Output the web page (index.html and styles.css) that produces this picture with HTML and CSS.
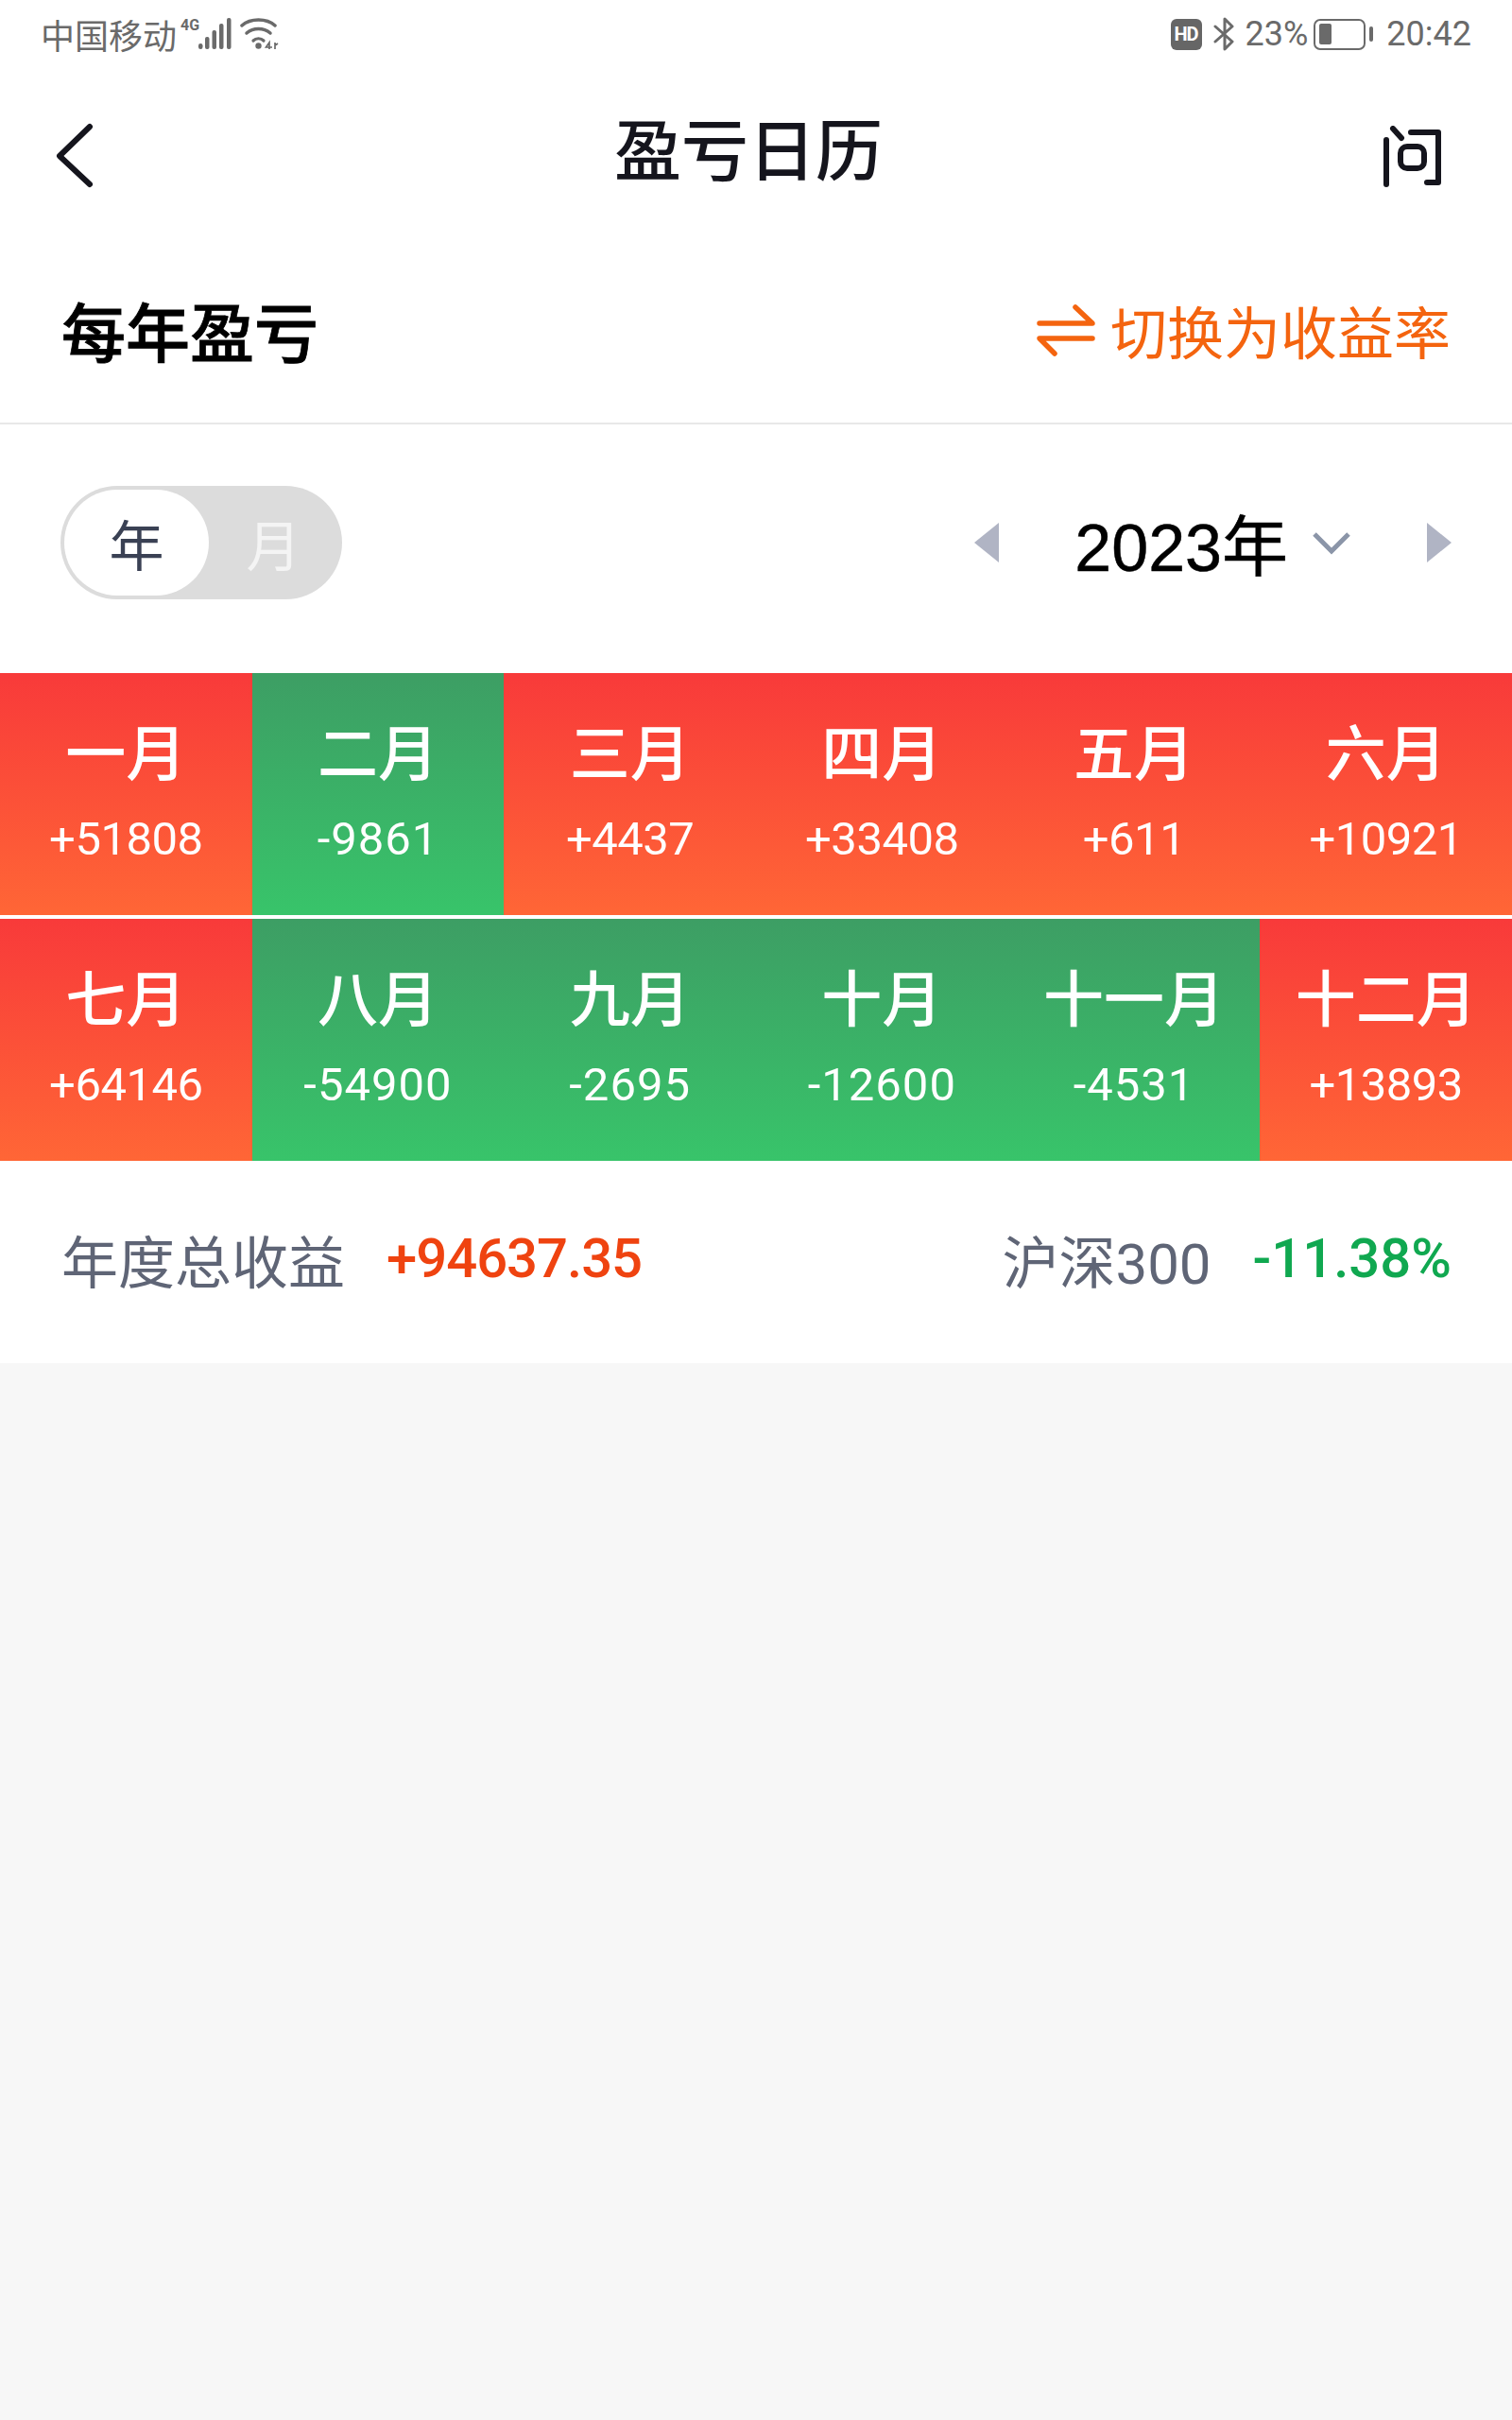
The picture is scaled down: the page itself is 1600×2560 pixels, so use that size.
FILE: index.html
```html
<!DOCTYPE html>
<html lang="zh-CN">
<head>
<meta charset="utf-8">
<title>盈亏日历</title>
<link rel="stylesheet" href="styles.css">
</head>
<body>
<div class="app">
  <div class="status">
    <div class="status-side">
      <span>中国移动</span>
      <svg class="ic-signal" width="56" height="36" viewBox="0 0 56 36">
        <text x="0" y="14" class="net">4G</text>
        <g fill="#6a6a6a"><rect x="19" y="28" width="4.500" height="6" rx="2.200"/><rect x="26" y="21" width="4.500" height="13" rx="2"/><rect x="33.500" y="14" width="4.500" height="20" rx="2"/><rect x="41" y="7" width="4.500" height="27" rx="2"/><rect x="49" y="1" width="4.500" height="33" rx="2"/></g>
      </svg>
      <svg class="ic-wifi" width="44" height="36" viewBox="0 0 44 36">
        <g fill="none" stroke="#6a6a6a" stroke-width="3.500" stroke-linecap="round"><path d="M3 9C12 1 29 1 38 9"/><path d="M8 17C15 11 26 11 33 17"/></g>
        <path d="M15 25C18 22 23 22 26 25" fill="none" stroke="#6a6a6a" stroke-width="3.200" stroke-linecap="round"/>
        <circle cx="20.500" cy="30.500" r="3.200" fill="#6a6a6a"/>
        <path d="M32 34v-7l-3.500 5H35M38 27v7M38 30l3-2" fill="none" stroke="#6a6a6a" stroke-width="1.700"/>
      </svg>
    </div>
    <div class="status-side">
      <span class="hd">HD</span>
      <svg class="ic-bt" width="24" height="36" viewBox="0 0 24 36">
        <path d="M2 26L20 10 12 2v32l8-8L2 10" fill="none" stroke="#6a6a6a" stroke-width="3" stroke-linejoin="round" stroke-linecap="round"/>
      </svg>
      <span class="pct">23%</span>
      <span class="battery"><span class="battery-level"></span></span><span class="battery-cap"></span>
      <span class="clock">20:42</span>
    </div>
  </div>

  <header class="nav">
    <svg class="ic-back" width="44" height="72" viewBox="0 0 44 72">
      <path d="M37 4L5 35 37 65" fill="none" stroke="#15151d" stroke-width="6" stroke-linecap="round" stroke-linejoin="round"/>
    </svg>
    <h1 class="nav-title">盈亏日历</h1>
    <svg class="ic-ask" width="66" height="66" viewBox="0 0 66 66">
      <g fill="none" stroke="#15151d" stroke-width="6" stroke-linecap="round" stroke-linejoin="round">
        <path d="M7 15V62"/><path d="M14 3l9 10"/><path d="M33 7H62V60H50"/><rect x="22" y="22" width="25" height="23" rx="7"/>
      </g>
    </svg>
  </header>

  <section class="head">
    <h2 class="head-title">每年盈亏</h2>
    <div class="switch">
      <svg width="62" height="56" viewBox="0 0 62 56">
        <g fill="none" stroke="#f4640f" stroke-width="5.500" stroke-linecap="round" stroke-linejoin="round">
          <path d="M3 21H59L41 4"/><path d="M59 37H3L19 53"/>
        </g>
      </svg>
      <span>切换为收益率</span>
    </div>
  </section>

  <section class="filter">
    <div class="toggle">
      <span class="toggle-on">年</span>
      <span class="toggle-off">月</span>
    </div>
    <div class="year-pick">
      <span class="tri tri-left"></span>
      <span class="year">2023年</span>
      <svg class="ic-chev" width="42" height="26" viewBox="0 0 42 26">
        <path d="M3 4L21 22 39 4" fill="none" stroke="#8b95a8" stroke-width="5"/>
      </svg>
      <span class="tri tri-right"></span>
    </div>
  </section>

  <section class="months">
    <div class="cell up"><b>一月</b><i>+51808</i></div>
    <div class="cell down"><b>二月</b><i>-9861</i></div>
    <div class="cell up"><b>三月</b><i>+4437</i></div>
    <div class="cell up"><b>四月</b><i>+33408</i></div>
    <div class="cell up"><b>五月</b><i>+611</i></div>
    <div class="cell up"><b>六月</b><i>+10921</i></div>
    <div class="cell up"><b>七月</b><i>+64146</i></div>
    <div class="cell down"><b>八月</b><i>-54900</i></div>
    <div class="cell down"><b>九月</b><i>-2695</i></div>
    <div class="cell down"><b>十月</b><i>-12600</i></div>
    <div class="cell down"><b>十一月</b><i>-4531</i></div>
    <div class="cell up"><b>十二月</b><i>+13893</i></div>
  </section>

  <section class="total">
    <div class="total-item"><span class="label">年度总收益</span><span class="val red">+94637.35</span></div>
    <div class="total-item"><span class="label">沪深300</span><span class="val green">-11.38%</span></div>
  </section>
</div>
</body>
</html>
```

FILE: styles.css
```css
* { box-sizing: border-box; }
html, body { margin: 0; padding: 0; }
body {
  width: 1600px;
  height: 2560px;
  background: #f7f7f7;
  font-family: "Roboto", "Noto Sans CJK SC", sans-serif;
}
.app { display: flex; flex-direction: column; }

/* status bar */
.status {
  height: 72px;
  background: #fff;
  padding: 0 43px 0 43px;
  display: flex;
  justify-content: space-between;
  align-items: center;
  color: #6a6a6a;
  font-size: 36px;
}
.status-side { display: flex; align-items: center; }
.ic-signal { margin-left: 4px; }
.ic-wifi { margin-left: 6px; }
.net { font: 700 16px "Roboto", sans-serif; fill: #6a6a6a; }
.hd {
  width: 33px; height: 33px; border-radius: 6px;
  background: #666; color: #fff;
  font-size: 20px; font-weight: 700;
  letter-spacing: -1px;
  display: flex; align-items: center; justify-content: center;
}
.ic-bt { margin-left: 12px; }
.pct { margin-left: 10px; }
.battery {
  margin-left: 6px;
  width: 55px; height: 33px;
  border: 2.500px solid #6a6a6a; border-radius: 7px;
  padding: 3.500px; display: flex;
}
.battery-level { width: 13px; background: #6a6a6a; border-radius: 2px; }
.battery-cap { width: 4px; height: 16px; margin-left: 4px; background: #6a6a6a; border-radius: 2px; }
.clock { margin-left: 14px; }

/* title bar */
.nav {
  height: 188px;
  background: #fff;
  padding: 0 74px 0 58px;
  display: grid;
  grid-template-columns: 1fr auto 1fr;
  align-items: center;
}
.ic-ask { justify-self: end; }
.nav-title {
  margin: 0 0 10px;
  font-size: 71px;
  font-weight: 500;
  color: #15151d;
  line-height: 1.4;
}

/* section heading */
.head {
  height: 189px;
  background: #fff;
  border-bottom: 2px solid #e8e8e8;
  padding: 0 65px 10px;
  display: flex;
  justify-content: space-between;
  align-items: center;
}
.head-title {
  margin: 0;
  font-size: 68px;
  font-weight: 500;
  color: #000;
  -webkit-text-stroke: 0.8px #000;
}
.switch { display: flex; align-items: center; gap: 16px; color: #f4640f; font-size: 60px; }

/* year / month toggle and year picker */
.filter {
  height: 263px;
  background: #fff;
  padding: 0 64px 14px 64px;
  display: flex;
  justify-content: space-between;
  align-items: center;
}
.toggle {
  width: 298px; height: 120px;
  border-radius: 60px;
  background: #dcdcdc;
  padding: 4px;
  display: flex;
  align-items: center;
  font-size: 58px;
}
.toggle-on {
  width: 153px; height: 112px;
  border-radius: 56px;
  background: #fff;
  color: #3a4154;
  display: flex; align-items: center; justify-content: center;
}
.toggle-off { width: 137px; text-align: center; color: #f4f4f4; }
.year-pick { display: flex; align-items: center; }
.tri { width: 0; height: 0; border-top: 21px solid transparent; border-bottom: 21px solid transparent; }
.tri-left { border-right: 26px solid #b0b4c4; }
.tri-right { border-left: 26px solid #b0b4c4; margin-left: 80px; }
.year {
  margin-left: 80px;
  font-size: 70px;
  color: #000;
  -webkit-text-stroke: 0.5px #000;
  font-family: "Liberation Sans", "Noto Sans CJK SC", sans-serif;
}
.ic-chev { margin-left: 25px; }

/* month grid */
.months {
  display: grid;
  grid-template-columns: repeat(6, 1fr);
  row-gap: 4px;
  background: #fff;
}
.cell {
  height: 256px;
  display: flex;
  flex-direction: column;
  align-items: center;
  color: #fff;
  padding-top: 42px;
}
.cell b { font-size: 64px; font-weight: 500; line-height: 90px; }
.cell i { font-size: 49px; font-style: normal; font-weight: 400; line-height: 60px; margin-top: 14px; letter-spacing: -0.5px; }
.up { background: linear-gradient(#f83a3a, #ff6636); }
.down { background: linear-gradient(#3d9e64, #38c46a); }
.down i { letter-spacing: 1px; }

/* yearly summary */
.total {
  height: 214px;
  background: #fff;
  padding: 0 64px 8px 65px;
  display: flex;
  justify-content: space-between;
  align-items: center;
  font-size: 60px;
}
.total-item { display: flex; align-items: center; gap: 44px; }
.label { color: #5f6576; }
.val { font-weight: 500; font-size: 58px; }
.red { color: #ef4310; letter-spacing: -1px; }
.green { color: #10a850; }
```
